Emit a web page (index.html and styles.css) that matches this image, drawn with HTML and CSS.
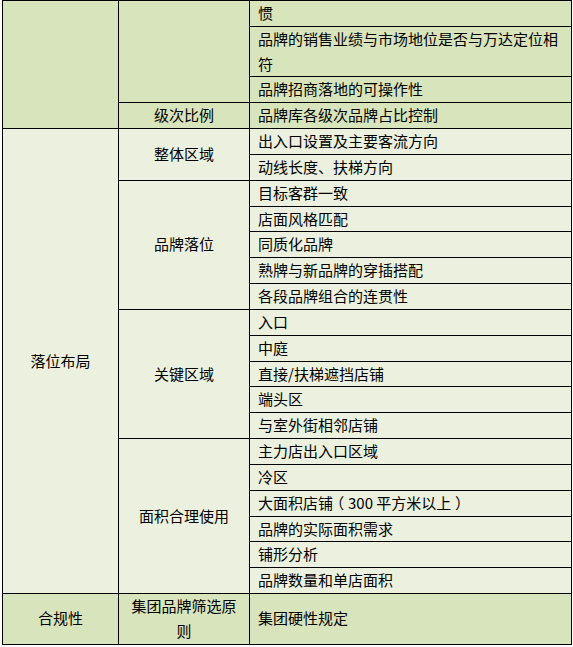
FILE: index.html
```html
<!DOCTYPE html>
<html lang="zh-CN">
<head>
<meta charset="utf-8">
<title>品牌筛选</title>
<link rel="stylesheet" href="styles.css">
</head>
<body>
<table class="grid">
  <colgroup>
    <col class="c1">
    <col class="c2">
    <col class="c3">
  </colgroup>
  <tbody>
    <tr class="dark">
      <td class="center" rowspan="4"></td>
      <td class="center" rowspan="3"></td>
      <td>惯</td>
    </tr>
    <tr class="dark"><td>品牌的销售业绩与市场地位是否与万达定位相符</td></tr>
    <tr class="dark"><td>品牌招商落地的可操作性</td></tr>
    <tr class="dark">
      <td class="center">级次比例</td>
      <td>品牌库各级次品牌占比控制</td>
    </tr>

    <tr class="light">
      <td class="center" rowspan="18">落位布局</td>
      <td class="center" rowspan="2">整体区域</td>
      <td>出入口设置及主要客流方向</td>
    </tr>
    <tr class="light"><td>动线长度、扶梯方向</td></tr>
    <tr class="light">
      <td class="center" rowspan="5">品牌落位</td>
      <td>目标客群一致</td>
    </tr>
    <tr class="light"><td>店面风格匹配</td></tr>
    <tr class="light"><td>同质化品牌</td></tr>
    <tr class="light"><td>熟牌与新品牌的穿插搭配</td></tr>
    <tr class="light"><td>各段品牌组合的连贯性</td></tr>
    <tr class="light">
      <td class="center" rowspan="5">关键区域</td>
      <td>入口</td>
    </tr>
    <tr class="light"><td>中庭</td></tr>
    <tr class="light"><td>直接/扶梯遮挡店铺</td></tr>
    <tr class="light"><td>端头区</td></tr>
    <tr class="light"><td>与室外街相邻店铺</td></tr>
    <tr class="light">
      <td class="center" rowspan="6">面积合理使用</td>
      <td>主力店出入口区域</td>
    </tr>
    <tr class="light"><td>冷区</td></tr>
    <tr class="light"><td>大面积店铺<span class="paren">（</span>300 平方米以上<span class="paren">）</span></td></tr>
    <tr class="light"><td>品牌的实际面积需求</td></tr>
    <tr class="light"><td>铺形分析</td></tr>
    <tr class="light"><td>品牌数量和单店面积</td></tr>

    <tr class="dark">
      <td class="center">合规性</td>
      <td class="center">集团品牌筛选原则</td>
      <td>集团硬性规定</td>
    </tr>
  </tbody>
</table>
</body>
</html>
```

FILE: styles.css
```css
html, body {
  margin: 0;
  padding: 0;
  background: #ffffff;
}

body {
  font-family: "Noto Sans CJK SC", "Noto Sans", sans-serif;
  font-size: 15px;
  color: #000000;
}

.grid {
  margin-left: 2px;
  width: 569px;
  border-collapse: collapse;
  table-layout: fixed;
}

.c1 { width: 116px; }
.c2 { width: 131px; }
.c3 { width: 322px; }

.grid td {
  border: 1px solid #000000;
  padding: 0 8px;
  line-height: 24.83px;
  vertical-align: middle;
  text-align: left;
  word-break: break-all;
}

.grid td.center {
  text-align: center;
}

.paren {
  display: inline-block;
  width: 1em;
  text-align: center;
  font-feature-settings: "halt" 1;
  text-spacing-trim: space-all;
}

.dark td {
  background: #d8e4bc;
}

.light td {
  background: #ebf1de;
}
```
